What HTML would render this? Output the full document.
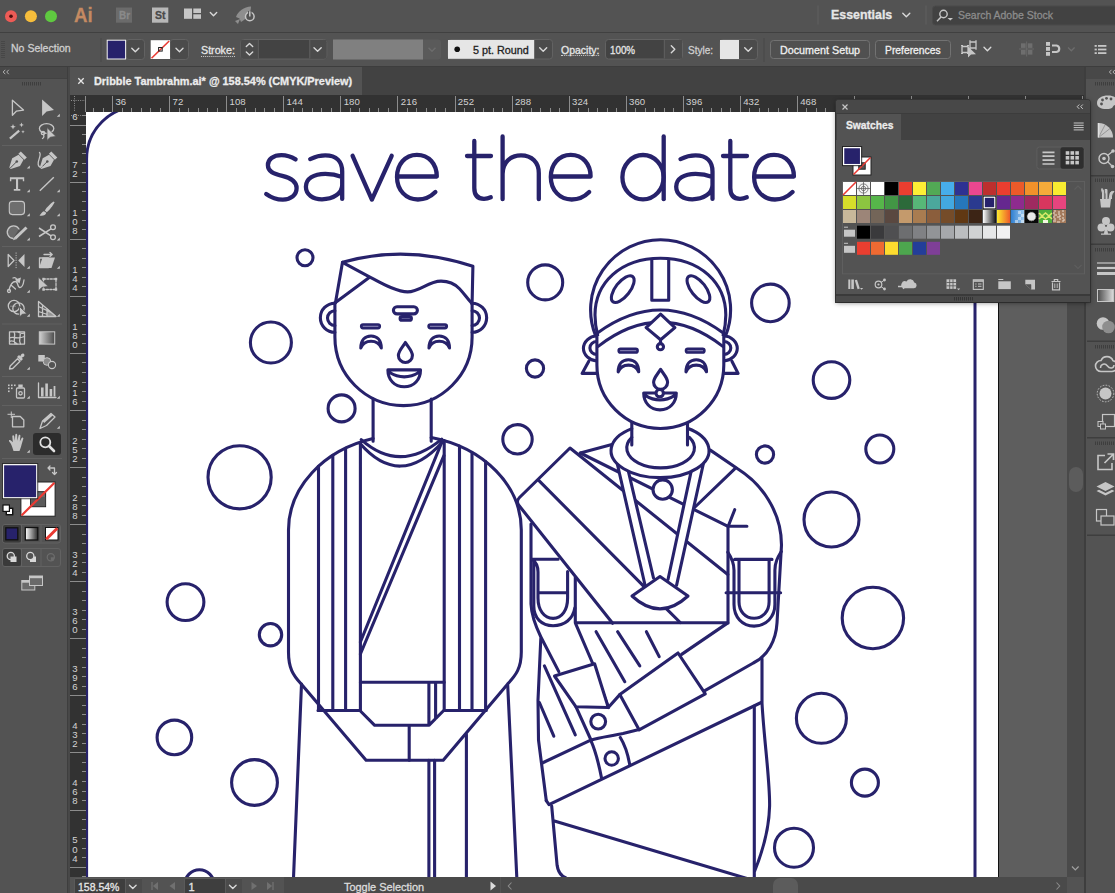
<!DOCTYPE html>
<html><head><meta charset="utf-8"><style>
*{box-sizing:border-box;margin:0;padding:0}
html,body{width:1115px;height:893px;overflow:hidden;background:#535353;font-family:"Liberation Sans",sans-serif;}
.abs{position:absolute}
#root{position:relative;width:1115px;height:893px;overflow:hidden;background:#535353}
.t{position:absolute;white-space:nowrap;color:#dcdcdc;font-size:12px;line-height:14px;transform-origin:0 50%;-webkit-text-stroke:0.3px currentColor}
svg{position:absolute;left:0;top:0;overflow:visible}
</style></head><body>
<div id="root">
<!-- BASE BACKGROUNDS -->
<div class="abs" id="titlebar" style="left:0;top:0;width:1115px;height:32px;background:#535353"></div>
<div class="abs" style="left:0;top:32px;width:1115px;height:1px;background:#404040"></div>
<div class="abs" id="ctrlbar" style="left:0;top:33px;width:1115px;height:33px;background:#535353"></div>
<div class="abs" style="left:0;top:65.5px;width:1115px;height:1.5px;background:#3d3d3d"></div>
<!-- tab bar -->
<div class="abs" style="left:68px;top:67px;width:1018px;height:28px;background:#424242"></div>
<div class="abs" style="left:70px;top:67px;width:292px;height:28px;background:#535353"></div>
<!-- rulers -->
<div class="abs" style="left:70px;top:95px;width:1016px;height:17px;background:#323232"></div>
<div class="abs" style="left:70px;top:95px;width:16px;height:782px;background:#323232"></div>
<!-- canvas pasteboard -->
<div class="abs" id="paste" style="left:86px;top:112px;width:981px;height:765px;background:#5e5e5e"></div>
<!-- artboard -->
<div class="abs" id="artboard" style="left:86px;top:112px;width:913px;height:765px;background:#fff;border-right:1px solid #111"></div>
<!--ARTSTART--><svg width="1115" height="893" viewBox="0 0 1115 893">
<defs><clipPath id="cv"><rect x="86" y="112" width="912" height="765"/></clipPath></defs>
<g clip-path="url(#cv)" fill="none" stroke="#27226b" stroke-width="3.1" stroke-linecap="round" stroke-linejoin="round">
<!-- card border -->
<path d="M86.6 900V159A52.6 52.6 0 0 1 139.2 106.4H922.4A52.6 52.6 0 0 1 975 159V900" stroke-width="3"/>
<!-- TEXT save the date -->
<g id="txt" stroke-width="4.3">
<path d="M295.6 159.4C291 156.5 286.5 155.1 281.5 155.1C273 155.1 267.9 159.5 267.9 165.2C267.9 171.5 273.5 173.8 282.3 175.9C291 178 296.6 181 296.6 188.1C296.6 195 291 199.6 282.8 199.6C276 199.6 270.5 197 266.2 193.9"/>
<path id="la" d="M310.2 159.1C315 156.8 320 155.4 325.3 155.4C336.5 155.4 342.2 161.5 342.2 171.5V198.9M342.2 177C337 175 331.5 173.8 325.3 173.8C313.5 173.8 305.9 178.8 305.9 186.7C305.9 194.5 313 199.3 322 199.3C333 199.3 342.2 193.5 342.2 185"/>
<path d="M352.6 155.8L371.9 199.6L391.7 155.8"/>
<path id="le" d="M397 176.5H436.8C436.8 164 428.9 154.8 416.9 154.8C404.9 154.8 397 164.5 397 177C397 190 405.9 199.5 417.9 199.5C425.4 199.5 430.9 196.5 435.4 192"/>
<path id="lt" d="M474.3 141V188C474.3 195.5 478 198.8 484 198.8C486.5 198.8 488.6 198.3 490.8 197.3M467 156H491"/>
<path d="M502.6 136.5V199.2M502.6 174C502.6 163 510 155.3 521 155.3C532 155.3 538.8 162.5 538.8 173V199.2"/>
<use href="#le" x="153.8"/>
<path d="M663.7 136.5V199.2"/><ellipse cx="643" cy="177.2" rx="20.6" ry="22.2"/>
<use href="#la" x="370.3"/>
<use href="#lt" x="256"/>
<use href="#le" x="357.1"/>
</g>
<!--FS--><!-- circles -->
<g id="circles">
<circle cx="305" cy="257.7" r="8"/><circle cx="270.9" cy="342.5" r="20.5"/><circle cx="341.6" cy="408.4" r="13.5"/>
<circle cx="545.2" cy="282.4" r="17.5"/><circle cx="770.4" cy="302.9" r="18.8"/><circle cx="535" cy="368.5" r="8.6"/>
<circle cx="517.5" cy="439.3" r="14.7"/><circle cx="831.5" cy="380.1" r="18.3"/><circle cx="879.8" cy="449" r="14"/>
<circle cx="765" cy="454.5" r="8.6"/><circle cx="831.5" cy="519.5" r="27.5"/><circle cx="872.9" cy="618" r="30.7"/>
<circle cx="821.4" cy="718.3" r="25"/><circle cx="864.9" cy="782.6" r="13.5"/><circle cx="794" cy="847.7" r="19.5"/>
<circle cx="239.6" cy="477.3" r="31.6"/><circle cx="185.5" cy="602.1" r="18.4"/><circle cx="270.5" cy="634.7" r="11.2"/>
<circle cx="174.4" cy="737.4" r="17.3"/><circle cx="254.5" cy="782.5" r="22.9"/><circle cx="199.4" cy="884.5" r="14.7"/>
</g>
<!-- GROOM -->
<g id="groom">
<!-- body -->
<path d="M373.1 438.6A116.4 95 0 0 0 288.5 530V652C288.5 668 293 675 300.8 683.5L366.1 760.3H443.2L507.7 683.9C516 675 521.3 668 521.3 652V530A116.4 95 0 0 0 431.2 437.5" fill="#fff"/>
<path d="M361.2 439.6Q399.8 474 441.7 439.1M359.9 443.3Q399.8 489.5 442.5 442"/>
<path d="M318.5 466.3V710.5M332.8 455.4V710.5M345.6 448.2V710.5M360.4 442.2V710.5M444.2 440.6V710.5M459.5 446.1V710.5M472 452.4V710.5M485.6 461.5V710.5"/>
<path d="M318 710.5H359.9L374.7 725.3H428.9L443.7 710.5H486.3M360.4 682.2H444.2M428.9 682.2V725.3M435.6 682.2V718.4M409.2 725.3V760.3"/>
<path d="M428.9 760.3V890M434.6 760.3V890M466.4 734.4V890M301.5 684L293 890M507.7 685L517.4 890"/>
<path d="M442.5 440.5L360.4 642M443.9 455.6L360.4 654"/>
<!-- neck -->
<path d="M373.1 399V441.2M431.2 399V441.2"/>
<!-- ears -->
<path d="M334.9 303.2A14.5 14.5 0 0 0 334.9 332.3M334.9 310.7A7.4 7.4 0 0 0 334.9 325.5M472.1 303.2A14.5 14.5 0 0 1 472.1 332.3M472.1 310.7A7.4 7.4 0 0 1 472.1 325.5"/>
<!-- face -->
<path d="M334.9 302.6V337A68.6 68.6 0 0 0 472.1 337V304"/>
<!-- hair -->
<path d="M335.5 302.6L342.5 262.3Q406 244.1 472.9 266.3L472.1 304"/>
<path d="M335.5 302.6L369.9 277.1M342.5 262.3L369.9 277.1C378 281.5 384 285 391.4 287.8C398 290.5 402 291.9 407.6 291.9C420 291.9 428 281.1 441 281.1C450 281.1 455 284 459.5 288.7C464 293.5 467 298 471.5 303"/>
<!-- forehead -->
<rect x="393.4" y="306.7" width="24" height="7.2" rx="3.6"/>
<rect x="400.1" y="316.6" width="11.3" height="3.7" rx="1.8" fill="#8f8cba"/>
<!-- brows -->
<path d="M363 326.3H378M430.4 326.3H445" stroke-width="6.2"/>
<path d="M363.2 326.3H378M430.4 326.3H444.7" stroke-width="1" stroke="#8f8cba"/>
<!-- eyes -->
<path id="eye" d="M360.8 348C360.8 340 365 336 371.05 336C377.1 336 381.3 340 381.3 348C379.5 343.5 376 341.3 371.05 341.3C366 341.3 362.6 343.5 360.8 348Z"/>
<use href="#eye" x="68.2"/>
<!-- nose -->
<path id="nose" d="M405.4 342.5C408.3 347.5 412.4 351 412.4 355.5A7 7 0 0 1 398.4 355.5C398.4 351 402.5 347.5 405.4 342.5Z"/>
<!-- mouth -->
<path id="mouth" d="M387.9 369.9H420.5C420.5 379.5 414 386.8 404.2 386.8C394.4 386.8 387.9 379.5 387.9 369.9ZM389.3 372.3Q404.2 381.5 419.1 372.3"/>
</g>
<!-- BRIDE -->
<g id="bride">
<!-- saree lower -->
<path d="M540.8 638.7L538 700.3L538.5 740L546.3 800.7"/>
<path d="M761.2 702.5L549 804.7L546.3 800.7"/>
<path d="M542.3 763L590.7 740.2C600 737 612 736 623 733.5L639.1 729.4"/>
<path d="M590.7 740.2C596 752 599 765 601.5 777.8M620.3 737.5C625 745 628 755 629.7 764.4"/>
<circle cx="611.7" cy="758.5" r="6.7"/><circle cx="598.2" cy="721.6" r="7.4"/>
<path d="M576 706.8L591 740"/>
<path d="M762 658.7V703C764 740 770 780 769.6 806C769 835 760 858 754.3 872M754.3 706.1V890"/>
<path d="M551.7 806.1L557.1 865.3C558 872 561 876 566 878M554.4 820.9L754 880.6"/>
<!-- hash -->
<path d="M596.1 631.7L624.8 681.7M617.6 631.7L639.8 665.9M646.4 631.7L659.2 656.6M544.4 665.9L575.3 734.8M539.4 702.5L553.8 736.2"/>
<!-- frame lines -->
<path d="M575.3 577.3V622.8H727.8M575.3 622.9L592.5 663L608.3 707.5M727.8 622.9L681.6 654.4"/>
<path d="M728 526.2V623M727.5 526.2H746.9M728.2 526.2L734.7 509.7"/>
<!-- hand rect -->
<path d="M554.5 676L594.6 663.8L608.3 707.5L576 706.8Z" fill="#fff"/>
<!-- forearm -->
<path d="M619.8 694.6L678 653L705.3 693.9L639.1 729.8Z" fill="#fff"/>
<path d="M608.3 707.5L619.8 694.6"/>
<!-- right arm outer -->
<path d="M710.3 450.1L737.6 468.8C762 484 781.5 512 781.5 545L777 623C776 640 768 656 753.3 663L705.3 690.3"/>
<path d="M734.7 468.8L694.5 507.5"/>
<!-- left shoulder & sash -->
<path d="M611.9 444.4L580.3 453"/>
<path d="M727.8 574.5L570 448L519.5 497.5Q515.5 501.5 519 505.5L612.6 623.3"/>
<path d="M538.7 480.3L644.1 586.7M580.3 453L727.5 526.2"/>
<path d="M531 524V604C531.5 617 536 627 541 637.2L558.8 671.6"/>
<!-- left armlet -->
<path d="M531.8 559.3H558.1M533.8 561V606C533.8 618 541.5 625.7 553.1 625.7C564.5 625.7 573 619 574.8 608M532.5 560C536 562 538 566 538 572V598C538 610 544 618.4 553.1 618.4C562 618.4 567.6 610 567.6 598V571.6M538 592.7H567.6"/>
<!-- right armlet -->
<path d="M734.7 559.4H772M727.8 552.2C731 557 734 562 734 570.2V604.6C734 617 742 626.1 754.1 626.1C766 626.1 774.9 617 774.9 604.6V570.2C774.9 562 778 557 781.3 551.5M739 559.4V601.7C739 611 745 618.2 754.1 618.2C763 618.2 769.1 611 769.1 601.7V559.4M726.1 592.7H780.6"/>
<!-- straps -->
<path d="M615 455L627 461L653.5 578L645 585Z" fill="#fff" stroke="none"/>
<path d="M694 458L706 452L676.6 585.2L668 579.5Z" fill="#fff" stroke="none"/>
<path d="M615.5 456L645 585M627 465.5L653.5 578M694 458L668 579.5M705.6 453.5L676.6 585.2"/>
<!-- ring -->
<circle cx="662.7" cy="489.6" r="9.7" fill="#fff"/>
<!-- pendant -->
<path d="M666.5 608.9L680.2 622.5"/>
<path d="M660 576.6L688 596Q660 621.8 632 596Z" fill="#fff"/>
<!-- choker -->
<ellipse cx="660.6" cy="450.4" rx="49" ry="27" fill="#fff" stroke="none"/><path d="M631.8 428.6A49 27 0 1 0 687.5 428.3"/>
<path d="M631.8 437.3A33.9 20 0 1 0 689.4 437.3"/>
<path d="M631.8 423V445M687.5 423V445"/>
<!-- veil -->
<path d="M595.6 335.7A70 70 0 1 1 725.6 335.7"/>
<path d="M597.7 335.5C596 329 595 322 595 315C595 283 620.4 258.2 660.4 258.2C700.4 258.2 725.8 283 725.8 315C725.8 322 724.8 329 723.1 335.5"/>
<!-- ears -->
<path d="M596.9 335.7A14.8 12.7 0 0 0 596.9 361M596.9 341.5A7 6.5 0 0 0 596.9 354.5M723.8 335.7A14.8 12.7 0 0 1 723.8 361M723.8 341.5A7 6.5 0 0 1 723.8 354.5"/>
<path d="M588.8 361.2L582.1 373.4H596.3M731.9 361.2L738.1 373.4H724.7"/>
<!-- face -->
<path d="M596.9 336V365A63.45 63.45 0 0 0 723.8 365V336" fill="#fff"/>
<path d="M597.4 333Q660.6 287 723.3 333M598.2 346.4Q660.6 298 722.8 346.4"/>
<path d="M651.8 260V300.3H668.7V260"/>
<ellipse cx="622.75" cy="289.1" rx="16" ry="7.2" transform="rotate(-52 622.75 289.1)"/>
<ellipse cx="698.45" cy="289.1" rx="16" ry="7.2" transform="rotate(52 698.45 289.1)"/>
<path d="M660.6 314.2L674.9 327.6L660.6 339.7L646.1 327.6Z" fill="#fff"/>
<path d="M660.5 339.7V343.5"/><circle cx="660.4" cy="346.7" r="3.1" fill="#fff"/>
<path d="M620.5 350.7H635.8M687.8 350.7H702.6" stroke-width="6.2"/>
<path d="M620.5 350.7H635.8M687.8 350.7H702.6" stroke-width="1" stroke="#8f8cba"/>
<use href="#eye" x="257.4" y="23.8"/><use href="#eye" x="325.2" y="23.8"/>
<use href="#nose" x="255.2" y="26.8"/>
<use href="#mouth" x="255.8" y="23.1"/>
<circle cx="659.7" cy="393.2" r="3.7" fill="#fff"/>
</g>
<!--FE-->
</g>
</svg>
<!--ARTEND-->
<!--UISTART--><style>
.ic{fill:none;stroke:#c6c6c6;stroke-width:1.3;stroke-linecap:round;stroke-linejoin:round}
.icf{fill:#c6c6c6;stroke:none}
.sep{position:absolute;background:#616161;height:1px}
.box{position:absolute;border:1px solid #646464;border-radius:3px;background:#4b4b4b}
.chev{fill:none;stroke:#d8d8d8;stroke-width:1.4;stroke-linecap:round;stroke-linejoin:round}
</style>
<!-- ===== TITLE BAR ===== -->
<svg width="1115" height="66" viewBox="0 0 1115 66">
<circle cx="11" cy="16.3" r="6" fill="#ee5b56"/><circle cx="11" cy="16.3" r="1.8" fill="#4d0e0c"/>
<circle cx="30.9" cy="16.3" r="6" fill="#f6bd3b"/><circle cx="51" cy="16.3" r="6" fill="#5fc940"/>
<rect x="116" y="7.5" width="16" height="15.2" fill="#6b6b6b"/><rect x="152" y="7.5" width="16.3" height="15.2" fill="#b8b8b8"/>
<!-- layout icon -->
<rect x="184" y="8.5" width="8" height="10.3" fill="#c6c6c6"/><rect x="193.3" y="8.5" width="7.7" height="4.5" fill="#c6c6c6"/><rect x="193.3" y="14.3" width="7.7" height="4.5" fill="#c6c6c6"/>
<path class="chev" d="M210.3 12.5L213.5 15.7L216.7 12.5"/>
<!-- rocket -->
<path d="M236 17C238 11 244 7 251 6.5C251 11 249 16 244 20L241 22L239.5 18.5Z" fill="#8e8e8e"/><path d="M235 21L240 19L238 24Z" fill="#8e8e8e"/>
<circle cx="249.8" cy="16.5" r="4.3" fill="#535353" stroke="#c6c6c6" stroke-width="1.5"/><path d="M249.8 11V16.5" stroke="#535353" stroke-width="3.5"/><path d="M249.8 11.3V16.5" stroke="#c6c6c6" stroke-width="1.5"/>
<!-- essentials -->
<rect x="817.5" y="5.5" width="1" height="19" fill="#616161"/><rect x="925.5" y="5.5" width="1" height="19" fill="#616161"/>
<path class="chev" d="M902.8 13.3L906.3 16.8L909.8 13.3"/>
<rect x="932.5" y="6" width="200" height="19" rx="3" fill="#424242" stroke="#4a4a4a"/>
<circle cx="943.5" cy="14" r="3.7" fill="none" stroke="#c6c6c6" stroke-width="1.4"/><path d="M941 17L937 21.3" stroke="#c6c6c6" stroke-width="1.4"/><path d="M947.5 18L953 18L950.3 20.6Z" fill="#c6c6c6"/>
<!-- ===== CONTROL BAR ===== -->
<path d="M2 41V59M4 41V59" stroke="#3d3d3d" stroke-width="1" stroke-dasharray="1 1"/>
<rect x="100.5" y="38" width="1" height="24" fill="#484848"/>
<!-- fill swatch -->
<rect x="126" y="39.5" width="18.5" height="20" rx="3" fill="#4b4b4b" stroke="#626262"/>
<rect x="107.2" y="40.2" width="18.4" height="18.8" fill="#27226b" stroke="#f2f2f2" stroke-width="1"/>
<path class="chev" d="M131.8 48.2L135.3 51.7L138.8 48.2"/>
<!-- stroke swatch -->
<rect x="170" y="39.5" width="18.5" height="20" rx="3" fill="#4b4b4b" stroke="#626262"/>
<rect x="150.7" y="40.2" width="19.3" height="18.8" fill="#fff"/><path d="M151.5 58.2L169.2 41" stroke="#ea3a33" stroke-width="1.6"/><rect x="158.6" y="47.5" width="3.6" height="3.6" fill="none" stroke="#222" stroke-width="1"/>
<path class="chev" d="M176 48.2L179.5 51.7L183 48.2"/>
<!-- stroke stepper / input -->
<rect x="240.8" y="39.5" width="86" height="19.5" rx="3" fill="#434343" stroke="#626262"/>
<rect x="241.3" y="40" width="16.5" height="18.5" fill="#4b4b4b"/><rect x="257.8" y="40" width="1" height="18.5" fill="#626262"/>
<rect x="309.8" y="40" width="16.5" height="18.5" fill="#4b4b4b"/><rect x="309.3" y="40" width="1" height="18.5" fill="#626262"/>
<path class="chev" d="M246.3 46.5L249.5 43.5L252.7 46.5M246.3 52L249.5 55L252.7 52"/>
<path class="chev" d="M314 47.8L317.6 51.3L321.2 47.8"/>
<!-- grey field -->
<rect x="333" y="39.5" width="108" height="20" rx="3" fill="#5a5a5a"/>
<rect x="333" y="39.5" width="90" height="20" fill="#808080"/>
<path d="M428.5 47.8L432 51.3L435.5 47.8" fill="none" stroke="#6c6c6c" stroke-width="1.4"/>
<!-- brush -->
<rect x="448" y="39.5" width="104.5" height="19.5" rx="3" fill="#4b4b4b" stroke="#626262"/>
<rect x="448" y="40" width="86.2" height="18.8" fill="#e6e6e6"/><circle cx="457.2" cy="49.3" r="2.8" fill="#111"/>
<path class="chev" d="M539.7 47.8L543.2 51.3L546.7 47.8"/>
<!-- opacity -->
<rect x="605.5" y="39.5" width="77" height="19.5" rx="3" fill="#434343" stroke="#626262"/>
<rect x="664.3" y="40" width="17.7" height="18.5" fill="#4b4b4b"/><rect x="663.8" y="40" width="1" height="18.5" fill="#626262"/>
<path class="chev" d="M671.3 45.8L674.8 49.3L671.3 52.8"/>
<!-- style -->
<rect x="720" y="39.5" width="37.5" height="20" rx="3" fill="#4b4b4b" stroke="#626262"/>
<rect x="720" y="40" width="19" height="19" fill="#e6e6e6"/>
<path class="chev" d="M744.7 47.8L748.2 51.3L751.7 47.8"/>
<rect x="763.5" y="38" width="1" height="24" fill="#484848"/>
<rect x="770.5" y="40.5" width="99" height="18" rx="3" fill="#505050" stroke="#727272"/>
<rect x="875.5" y="40.5" width="75" height="18" rx="3" fill="#505050" stroke="#727272"/>
<!-- arrange icon -->
<rect x="962" y="46.5" width="6" height="6" class="ic" stroke-width="1.2"/><rect x="970" y="42" width="6" height="6" class="ic" stroke-width="1.2"/>
<path d="M961 45.5h2m4 0h2m-8 8h2m4 0h2M969 41h2m4 0h2m-8 8h2m4 0h2" stroke="#c6c6c6" stroke-width="1"/>
<path d="M968 46.5L968 57.5L971 54.5L976 54.3Z" class="icf"/>
<path class="chev" d="M984 47.3L987.4 50.7L990.8 47.3"/>
<!-- grid icon dim -->
<g fill="#6e6e6e"><rect x="1021" y="43.3" width="4.6" height="4.6"/><rect x="1027.8" y="43.3" width="4.6" height="4.6"/><rect x="1021" y="50" width="4.6" height="4.6"/><rect x="1027.8" y="50" width="4.6" height="4.6"/><rect x="1026.3" y="41.5" width="0.8" height="15"/><rect x="1019" y="48.6" width="15" height="0.8"/></g>
<!-- magnet -->
<g fill="#c6c6c6"><rect x="1046" y="42" width="4" height="3.8"/><rect x="1046" y="47" width="4" height="3.8"/><rect x="1046" y="52" width="4" height="3.8"/></g>
<path d="M1052 45.5H1056.5A3.3 3.3 0 0 1 1056.5 52H1052" fill="none" stroke="#c6c6c6" stroke-width="2.2"/>
<path d="M1068 47.5L1071.3 50.8L1074.6 47.5" fill="none" stroke="#6c6c6c" stroke-width="1.3"/>
<!-- list icon -->
<g fill="#c6c6c6"><rect x="1094.6" y="45" width="2.2" height="1.8"/><rect x="1098" y="45" width="8.4" height="1.8"/><rect x="1094.6" y="48.6" width="2.2" height="1.8"/><rect x="1098" y="48.6" width="8.4" height="1.8"/><rect x="1094.6" y="52.2" width="2.2" height="1.8"/><rect x="1098" y="52.2" width="8.4" height="1.8"/></g>
</svg>
<!-- title texts -->
<div class="t" id="t_ai" style="transform:scaleX(0.8857);left:74.3px;top:3.5px;font-size:21px;line-height:21px;font-weight:bold;color:#c48a62">Ai</div>
<div class="t" id="t_br" style="transform:scaleX(0.8991);left:118.5px;top:9px;font-size:11px;line-height:13px;font-weight:bold;color:#8a8a8a">Br</div>
<div class="t" id="t_st" style="transform:scaleX(0.9545);left:155px;top:9px;font-size:11px;line-height:13px;font-weight:bold;color:#4a4a4a">St</div>
<div class="t" id="t_ess" style="transform:scaleX(0.9896);left:831.3px;top:7.5px;font-size:12.5px;line-height:15px;font-weight:bold;color:#e6e6e6">Essentials</div>
<div class="t" id="t_search" style="transform:scaleX(0.9115);left:958px;top:8px;font-size:11.5px;line-height:14px;color:#8c8c8c">Search Adobe Stock</div>
<div class="t" id="t_nosel" style="transform:scaleX(0.9571);left:11.3px;top:41.3px;font-size:11px;line-height:14px;color:#cfcfcf">No Selection</div>
<div class="t" id="t_stroke" style="transform:scaleX(0.9725);left:200.8px;top:43px;font-size:11px;line-height:14px;color:#e6e6e6;border-bottom:1px dotted #cfcfcf;height:13.5px">Stroke:</div>
<div class="t" id="t_brush" style="transform:scaleX(0.9811);left:472.6px;top:42.7px;font-size:11px;line-height:14px;color:#222">5 pt. Round</div>
<div class="t" id="t_op" style="transform:scaleX(0.9539);left:560.5px;top:42.7px;font-size:11px;line-height:14px;color:#e6e6e6;border-bottom:1px dotted #cfcfcf;height:13.8px">Opacity:</div>
<div class="t" id="t_100" style="transform:scaleX(0.8919);left:609.5px;top:42.5px;font-size:11px;line-height:14px;color:#e6e6e6">100%</div>
<div class="t" id="t_style" style="transform:scaleX(0.9086);left:688px;top:43px;font-size:11px;line-height:14px;color:#cfcfcf">Style:</div>
<div class="t" id="t_doc" style="transform:scaleX(0.9776);left:779.9px;top:42.7px;font-size:11px;line-height:14px;color:#f0f0f0">Document Setup</div>
<div class="t" id="t_pref" style="transform:scaleX(0.9374);left:885px;top:42.7px;font-size:11px;line-height:14px;color:#f0f0f0">Preferences</div>
<!-- ===== TOOLBOX ===== -->
<div class="abs" style="left:0;top:67px;width:67px;height:826px;background:#535353"></div>
<div class="abs" style="left:67px;top:67px;width:3px;height:826px;background:#484848"></div><div class="abs" style="left:67px;top:67px;width:1px;height:826px;background:#3e3e3e"></div>
<div class="abs" style="left:0;top:67px;width:67px;height:11.5px;background:#484848;border-bottom:1px solid #424242"></div>
<svg width="70" height="600" viewBox="0 0 70 600">
<path d="M5.3 69.8L3.2 72L5.3 74.2M8.8 69.8L6.7 72L8.8 74.2" fill="none" stroke="#b4b4b4" stroke-width="1"/>
<g fill="#3e3e3e"><rect x="22" y="82" width="1" height="3.5"/><rect x="24" y="82" width="1" height="3.5"/><rect x="26" y="82" width="1" height="3.5"/><rect x="28" y="82" width="1" height="3.5"/><rect x="30" y="82" width="1" height="3.5"/><rect x="32" y="82" width="1" height="3.5"/><rect x="34" y="82" width="1" height="3.5"/><rect x="36" y="82" width="1" height="3.5"/><rect x="38" y="82" width="1" height="3.5"/><rect x="40" y="82" width="1" height="3.5"/></g>
<!-- row1 -->
<path class="ic" d="M12.4 100.2V115.3L16.3 111.2L23.5 110.1Z"/>
<path class="icf" d="M42.1 99.5V116L46.6 111.5L54 110Z"/><path class="icf" d="M59.8 113.8V116.8H56.8Z"/>
<!-- row2 wand -->
<path d="M9.9 138.7L19.2 130.6" stroke="#c6c6c6" stroke-width="2.2"/><path class="icf" d="M13 124l.8 2 2 .8-2 .8-.8 2-.8-2-2-.8 2-.8zM21.5 122.5l.7 1.7 1.7.7-1.7.7-.7 1.7-.7-1.7-1.7-.7 1.7-.7zM23 130l.5 1.2 1.2.5-1.2.5-.5 1.2-.5-1.2-1.2-.5 1.2-.5z"/>
<!-- lasso -->
<ellipse cx="46.6" cy="128.5" rx="7.2" ry="4.8" class="ic" stroke-width="1.2"/><circle cx="43" cy="133" r="1.7" class="ic" stroke-width="1.1"/><path class="ic" d="M43.5 134.7C44.5 136.5 43.5 138 42.5 138.5" stroke-width="1.1"/>
<path d="M47 127.5V140.5L50.3 137.2L56 136.5Z" fill="#c6c6c6" stroke="#535353" stroke-width="0.8"/>
<rect x="2" y="145" width="60" height="1" fill="#616161"/>
<!-- row3 pen -->
<g id="pen"><path class="icf" d="M9.3 167.5L12.2 158.3L18.6 154.8L23.5 159.7L20 166.1L10.8 169Z"/><path d="M10.3 168L16.5 161.8" stroke="#535353" stroke-width="1"/><circle cx="16.8" cy="161.5" r="1.3" fill="#535353"/><path d="M19.5 153.8L24.5 158.8" stroke="#535353" stroke-width="1.3"/><path class="icf" d="M19.6 152.6L22 150.2L28 156.2L25.6 158.6Z" transform="translate(-1.2 1.2)"/></g>
<path class="icf" d="M29.8 165.5V168.5H26.8Z"/>
<use href="#pen" x="30.5"/><path class="ic" d="M39.5 152.5C42 155 37.5 160 38.2 164.5C38.7 167 40.5 167.8 42 166.5" stroke-width="1.2"/>
<!-- row4 T / line -->
<path class="icf" d="M9.9 177.3H24.2V181.2H22.8V179.2H18.1V188.9H20.3V190.7H13.8V188.9H16V179.2H11.3V181.2H9.9Z"/><path class="icf" d="M29.8 189.2V192.2H26.8Z"/>
<path d="M39.8 190.7L53.8 177.3" stroke="#c6c6c6" stroke-width="1.4"/><path class="icf" d="M59.8 189.2V192.2H56.8Z"/>
<!-- row5 rect / brush -->
<rect x="9.3" y="201.4" width="15.2" height="13.2" rx="3" fill="#6e6e6e" stroke="#c6c6c6" stroke-width="1.1"/><path class="icf" d="M29.8 213.2V216.2H26.8Z"/>
<path d="M53.5 201.5C50.5 203.5 46.5 207.5 44.8 210.5L46.8 212.2C49.5 210 53.2 205.5 54.6 202.3Z" class="icf"/><path class="icf" d="M44 211.3C42 211.5 41.5 213.5 39.5 215.5C42.5 216.5 46 215 46.2 212.8Z"/><path class="icf" d="M59.8 213.2V216.2H56.8Z"/>
<!-- row6 shaper / scissors -->
<path d="M19 229A6.3 6.3 0 1 0 13 238.5" class="ic" stroke-width="1.2" style="fill:#6a6a6a"/><path d="M15 238.5L26.5 227.5" stroke="#c6c6c6" stroke-width="3"/><path class="icf" d="M13 240.3L14 237.2L16 239.2Z"/><path class="icf" d="M29.8 237.6V240.6H26.8Z"/>
<circle cx="53" cy="227.3" r="2.4" class="ic" stroke-width="1.2"/><circle cx="53" cy="237.3" r="2.4" class="ic" stroke-width="1.2"/><path d="M51 228.8L39 236.5M51 235.8L39 228" stroke="#c6c6c6" stroke-width="1.6"/><path class="icf" d="M59.8 237.6V240.6H56.8Z"/>
<rect x="2" y="246" width="60" height="1" fill="#616161"/>
<!-- row7 reflect / shear -->
<path class="ic" d="M8.2 254.5V266.5L14 260.5Z" stroke-width="1.1"/><path class="icf" d="M24.5 254V267L18.2 260.5Z"/><path d="M16.1 252.5V268.5" stroke="#c6c6c6" stroke-width="0.9" stroke-dasharray="1.2 1.2"/><path class="icf" d="M29.8 265.8V268.8H26.8Z"/>
<path class="icf" d="M42.5 257.5H55L51.5 268H39Z"/><rect x="39.5" y="258" width="9" height="9.5" class="ic" stroke-width="1" /><path class="ic" d="M44 254.5H52M50 252.5L52.2 254.5L50 256.5" stroke-width="1.1"/><path class="icf" d="M59.8 265.8V268.8H56.8Z"/>
<!-- row8 warp / free transform -->
<path class="ic" d="M9 290C10 286 12 281.5 15.5 281.5C18.5 281.5 17 287.5 20 287.5C22.5 287.5 23.5 283.5 24 280" stroke-width="1.3"/><path class="ic" d="M13 278C15 277 17.5 278.5 17 281M11.5 285.5L15.5 289" stroke-width="1.2"/><circle cx="9" cy="291" r="1.5" class="ic" stroke-width="1"/><path class="icf" d="M15 279.5L21 277.5L19.5 283.5Z"/><path class="icf" d="M29.8 289.8V292.8H26.8Z"/>
<rect x="43.5" y="279" width="12.5" height="10.5" class="ic" stroke-width="1" stroke-dasharray="2 1.4"/><g class="icf"><rect x="42.3" y="277.8" width="2.4" height="2.4"/><rect x="54.8" y="277.8" width="2.4" height="2.4"/><rect x="42.3" y="288.3" width="2.4" height="2.4"/><rect x="54.8" y="288.3" width="2.4" height="2.4"/></g><path d="M38.3 277V291L42 287.3L48.3 286.5Z" fill="#c6c6c6" stroke="#535353" stroke-width="0.8"/>
<!-- row9 shape builder / perspective -->
<circle cx="14" cy="306" r="5.7" class="ic" stroke-width="1.1"/><circle cx="18.5" cy="308.5" r="5.7" class="ic" stroke-width="1.1"/><path d="M10.5 306.2H15.5" stroke="#c6c6c6" stroke-width="1" stroke-dasharray="1 1"/><path d="M19.5 306.5V317L22.2 314.3L27 313.8Z" fill="#c6c6c6" stroke="#535353" stroke-width="0.8"/><path class="icf" d="M29.8 313.8V316.8H26.8Z"/>
<path class="ic" d="M38.5 301.5V316.5L56 316.5ZM42.5 305V316.5M47 309V316.5M38.5 306.5L51 312.3M38.5 311.5L46 314" stroke-width="1"/><path class="icf" d="M47 308L57 316.8H47Z" opacity=".55"/><path class="icf" d="M59.8 313.8V316.8H56.8Z"/>
<rect x="2" y="323.5" width="60" height="1" fill="#616161"/>
<!-- row10 mesh / gradient -->
<rect x="9.5" y="331.8" width="15" height="12.3" class="ic" stroke-width="1.1"/><path class="ic" d="M9.5 338C13 335.5 16 340 24.5 336.5M14 331.8C16.5 335.5 12.5 339.5 15 344M19.5 331.8C22.5 336 17.5 339 20.5 344M9.5 341.5C13 339.5 15 342 17 344M18 331.8C20 334 22.5 333.5 24.5 332.8" stroke-width="1"/>
<defs><linearGradient id="gr1" x1="0" x2="1"><stop offset="0" stop-color="#d2d2d2"/><stop offset="1" stop-color="#4a4a4a"/></linearGradient><linearGradient id="gr3" x1="0" x2="1"><stop offset="0" stop-color="#fff"/><stop offset="1" stop-color="#2a2a2a"/></linearGradient><linearGradient id="gr2" x1="0" x2="1"><stop offset="0" stop-color="#4a4a4a"/><stop offset="1" stop-color="#e0e0e0"/></linearGradient></defs>
<rect x="39.3" y="331.8" width="15.4" height="12.3" fill="url(#gr1)" stroke="#c6c6c6" stroke-width="1"/>
<!-- row11 eyedropper / blend -->
<path d="M9.5 369L10.2 366L17.5 358.7L20 361.2L12.7 368.5Z" class="ic" stroke-width="1.2"/><path class="icf" d="M17 357L19 355L20.3 356.3C21 354 22.5 352.8 24 354C25.2 355.5 24 357 21.7 357.7L23 359L21 361Z"/><path class="icf" d="M29.8 366.8V369.8H26.8Z"/>
<rect x="38.3" y="355" width="6.5" height="6.5" class="icf"/><circle cx="47" cy="361.5" r="3.8" fill="#8a8a8a" stroke="#c6c6c6" stroke-width="1"/><circle cx="52" cy="365" r="3.6" fill="#535353" stroke="#c6c6c6" stroke-width="1.1"/>
<rect x="2" y="376" width="60" height="1" fill="#616161"/>
<!-- row12 sprayer / graph -->
<rect x="16.5" y="388" width="8" height="10" rx="1" class="ic" stroke-width="1.2"/><rect x="18.3" y="384.5" width="4.4" height="3" class="icf"/><circle cx="20.5" cy="393.3" r="1.7" class="ic" stroke-width="1"/><g class="icf"><rect x="8" y="384.5" width="1.6" height="1.6"/><rect x="11" y="384.5" width="1.6" height="1.6"/><rect x="14" y="384.5" width="1.6" height="1.6"/><rect x="8" y="387.5" width="1.6" height="1.6"/><rect x="11" y="387.5" width="1.6" height="1.6"/><rect x="8" y="390.5" width="1.6" height="1.6"/></g><path class="icf" d="M29.8 395.8V398.8H26.8Z"/>
<path d="M38.5 383V397.5H56" class="ic" stroke-width="1.1"/><g class="icf"><rect x="41" y="387.5" width="2.6" height="9"/><rect x="45.3" y="383.5" width="2.6" height="13"/><rect x="49.6" y="389" width="2.6" height="7.5"/><rect x="53.6" y="386" width="1.8" height="10.5"/></g><path class="icf" d="M59.8 395.8V398.8H56.8Z"/>
<rect x="2" y="405" width="60" height="1" fill="#616161"/>
<!-- row13 artboard / slice -->
<path class="ic" d="M12.5 416.5V426.8H23.8V420L20.3 416.5Z" stroke-width="1.2"/><path d="M7.5 414.3H15M11.3 411.5V418" stroke="#c6c6c6" stroke-width="1"/>
<path d="M40 428.5L42.5 421L51 413.5L55 417L46.5 425.5Z" class="ic" stroke-width="1.2"/><path d="M42.5 421L51 413.5L53 415.3L44.2 423Z" class="icf"/><path class="icf" d="M59.8 425.8V428.8H56.8Z"/>
<!-- row14 hand / zoom -->
<path class="icf" d="M11.2 444.5C10.3 442.5 8.5 441.5 9 440.3C10 439.3 11.5 440.5 12.8 442.3L12.3 436.3C12.3 435 14 435 14.2 436.3L14.8 440.8L15.3 434.8C15.4 433.5 17.1 433.5 17.2 434.8L17.4 440.8L18.6 435.5C18.9 434.3 20.5 434.6 20.4 435.9L19.8 441.5L21.6 438C22.2 436.9 23.7 437.5 23.3 438.8L21.6 444.5C21 447.5 20 449.5 19.5 451H13.5C13 449 12 446.5 11.2 444.5Z"/><path class="icf" d="M29.8 449.8V452.8H26.8Z"/>
<rect x="33" y="433" width="28" height="22" rx="3" fill="#2c2c2c"/>
<circle cx="45.3" cy="442.3" r="5" fill="none" stroke="#e2e2e2" stroke-width="1.8"/><path d="M49 446L54 451" stroke="#e2e2e2" stroke-width="2.6" stroke-linecap="round"/>
<rect x="2" y="458" width="60" height="1" fill="#616161"/>
<!-- fill/stroke -->
<rect x="20.9" y="482" width="34.2" height="34.2" fill="#fff" stroke="#222" stroke-width="1"/><rect x="30.6" y="491.7" width="15" height="15" fill="#6a6a6a" stroke="#222" stroke-width="1"/><rect x="31.3" y="497" width="14" height="9" fill="#5a5a5a"/>
<path d="M21.5 515.5L54.5 482.7" stroke="#ea3a33" stroke-width="2.2"/>
<rect x="3.4" y="464.6" width="33.4" height="33.2" fill="#27226b" stroke="#f4f4f4" stroke-width="1.4"/><rect x="2.4" y="463.6" width="35.4" height="35.2" fill="none" stroke="#222" stroke-width="0.8"/>
<path class="ic" d="M48 468H54.5V474.5M48 468L50 466M48 468L50 470M54.5 474.5L52.5 472.5M54.5 474.5L56.5 472.5" stroke-width="1.2"/>
<rect x="6.3" y="508.3" width="6.4" height="6.4" fill="#fff" stroke="#111" stroke-width="1.4"/><rect x="3" y="505" width="6.4" height="6.4" fill="#fff" stroke="#111" stroke-width="1.2"/>
<!-- mode buttons -->
<rect x="2.5" y="524.5" width="58" height="18.5" rx="2.5" fill="none" stroke="#626262" stroke-width="1"/><rect x="3" y="525" width="18" height="17.5" rx="2" fill="#3a3a3a"/><path d="M21.5 525V542.5M41 525V542.5" stroke="#626262"/>
<rect x="5.8" y="527.8" width="12" height="12" fill="#27226b" stroke="#111" stroke-width="1.3"/>
<rect x="25.3" y="527.5" width="12.5" height="12.5" fill="url(#gr3)" stroke="#111" stroke-width="1.3"/>
<rect x="45.5" y="527.5" width="12.5" height="12.5" fill="#fff" stroke="#111" stroke-width="1"/><path d="M46.2 539.3L57.3 528.2" stroke="#ea3a33" stroke-width="3"/>
<rect x="2.5" y="548.5" width="58" height="18" rx="2.5" fill="none" stroke="#626262" stroke-width="1"/><rect x="3" y="549" width="18" height="17" rx="2" fill="#3a3a3a"/><path d="M21.5 549V566M41 549V566" stroke="#626262"/>
<circle cx="10.8" cy="556" r="3.6" fill="#535353" stroke="#d8d8d8" stroke-width="1.3"/><rect x="10.5" y="556.5" width="6" height="5.5" fill="#d8d8d8"/>
<rect x="30" y="556.5" width="6" height="5.5" fill="#d8d8d8"/><circle cx="30.3" cy="556" r="3.6" fill="#535353" stroke="#d8d8d8" stroke-width="1.3"/>
<circle cx="50.8" cy="557.3" r="3.6" fill="none" stroke="#6c6c6c" stroke-width="1.2"/><path d="M50.8 557.3h3.2v3.2h-3.2z" fill="#6c6c6c"/>
<!-- screen mode -->
<rect x="21.8" y="580.5" width="13" height="9.5" fill="#6a6a6a" stroke="#c6c6c6" stroke-width="1"/><rect x="21.8" y="580.5" width="13" height="2.2" fill="#c6c6c6"/>
<rect x="29.5" y="576" width="13" height="9.5" fill="#6a6a6a" stroke="#c6c6c6" stroke-width="1"/><rect x="29.5" y="576" width="13" height="2.2" fill="#c6c6c6"/>
</svg>
<!-- ===== TAB ===== -->
<svg width="1115" height="120" viewBox="0 0 1115 120">
<path d="M78.3 78.3L83.7 83.7M83.7 78.3L78.3 83.7" stroke="#e6e6e6" stroke-width="1.3"/>
<!-- ruler corner dotted -->
<path d="M71 100.5H85M74.5 96V112M71 115.5H82" stroke="#9a9a9a" stroke-width="0.9" stroke-dasharray="1 1.3"/>
<path d="M85.5 96V112" stroke="#8c8c8c" stroke-width="1"/>
</svg>
<div class="t" id="t_tab" style="transform:scaleX(0.9909);left:94.4px;top:73.5px;font-size:11px;line-height:14px;font-weight:bold;color:#ececec">Dribble Tambrahm.ai* @ 158.54% (CMYK/Preview)</div>
<!--RS--><svg width="1115" height="893" viewBox="0 0 1115 893"><g stroke="#8c8c8c" stroke-width="1" fill="none"><path d="M93.5 108V112"/><path d="M103.5 108V112"/><path d="M112.5 96V112"/><path d="M122.5 108V112"/><path d="M131.5 108V112"/><path d="M141.5 108V112"/><path d="M150.5 108V112"/><path d="M160.5 108V112"/><path d="M169.5 96V112"/><path d="M179.5 108V112"/><path d="M188.5 108V112"/><path d="M198.5 108V112"/><path d="M207.5 108V112"/><path d="M217.5 108V112"/><path d="M226.5 96V112"/><path d="M236.5 108V112"/><path d="M245.5 108V112"/><path d="M255.5 108V112"/><path d="M264.5 108V112"/><path d="M274.5 108V112"/><path d="M283.5 96V112"/><path d="M293.5 108V112"/><path d="M302.5 108V112"/><path d="M312.5 108V112"/><path d="M321.5 108V112"/><path d="M331.5 108V112"/><path d="M340.5 96V112"/><path d="M350.5 108V112"/><path d="M359.5 108V112"/><path d="M369.5 108V112"/><path d="M378.5 108V112"/><path d="M388.5 108V112"/><path d="M397.5 96V112"/><path d="M407.5 108V112"/><path d="M416.5 108V112"/><path d="M426.5 108V112"/><path d="M435.5 108V112"/><path d="M445.5 108V112"/><path d="M455.5 96V112"/><path d="M464.5 108V112"/><path d="M474.5 108V112"/><path d="M483.5 108V112"/><path d="M493.5 108V112"/><path d="M502.5 108V112"/><path d="M512.5 96V112"/><path d="M521.5 108V112"/><path d="M531.5 108V112"/><path d="M540.5 108V112"/><path d="M550.5 108V112"/><path d="M559.5 108V112"/><path d="M569.5 96V112"/><path d="M578.5 108V112"/><path d="M588.5 108V112"/><path d="M597.5 108V112"/><path d="M607.5 108V112"/><path d="M616.5 108V112"/><path d="M626.5 96V112"/><path d="M635.5 108V112"/><path d="M645.5 108V112"/><path d="M654.5 108V112"/><path d="M664.5 108V112"/><path d="M673.5 108V112"/><path d="M683.5 96V112"/><path d="M692.5 108V112"/><path d="M702.5 108V112"/><path d="M711.5 108V112"/><path d="M721.5 108V112"/><path d="M730.5 108V112"/><path d="M740.5 96V112"/><path d="M749.5 108V112"/><path d="M759.5 108V112"/><path d="M768.5 108V112"/><path d="M778.5 108V112"/><path d="M787.5 108V112"/><path d="M797.5 96V112"/><path d="M806.5 108V112"/><path d="M816.5 108V112"/><path d="M825.5 108V112"/><path d="M835.5 108V112"/><path d="M844.5 108V112"/><path d="M854.5 96V112"/><path d="M864.5 108V112"/><path d="M873.5 108V112"/><path d="M883.5 108V112"/><path d="M892.5 108V112"/><path d="M902.5 108V112"/><path d="M911.5 96V112"/><path d="M921.5 108V112"/><path d="M930.5 108V112"/><path d="M940.5 108V112"/><path d="M949.5 108V112"/><path d="M959.5 108V112"/><path d="M968.5 96V112"/><path d="M978.5 108V112"/><path d="M987.5 108V112"/><path d="M997.5 108V112"/><path d="M1006.5 108V112"/><path d="M1016.5 108V112"/><path d="M1025.5 96V112"/><path d="M1035.5 108V112"/><path d="M1044.5 108V112"/><path d="M1054.5 108V112"/><path d="M1063.5 108V112"/><path d="M1073.5 108V112"/><path d="M1082.5 96V112"/><path d="M82 115.5H86"/><path d="M70 125.5H86"/><path d="M82 134.5H86"/><path d="M82 144.5H86"/><path d="M82 153.5H86"/><path d="M82 163.5H86"/><path d="M82 172.5H86"/><path d="M70 182.5H86"/><path d="M82 191.5H86"/><path d="M82 201.5H86"/><path d="M82 210.5H86"/><path d="M82 220.5H86"/><path d="M82 229.5H86"/><path d="M70 239.5H86"/><path d="M82 248.5H86"/><path d="M82 258.5H86"/><path d="M82 267.5H86"/><path d="M82 277.5H86"/><path d="M82 286.5H86"/><path d="M70 296.5H86"/><path d="M82 305.5H86"/><path d="M82 315.5H86"/><path d="M82 324.5H86"/><path d="M82 334.5H86"/><path d="M82 343.5H86"/><path d="M70 353.5H86"/><path d="M82 362.5H86"/><path d="M82 372.5H86"/><path d="M82 382.5H86"/><path d="M82 391.5H86"/><path d="M82 401.5H86"/><path d="M70 410.5H86"/><path d="M82 420.5H86"/><path d="M82 429.5H86"/><path d="M82 439.5H86"/><path d="M82 448.5H86"/><path d="M82 458.5H86"/><path d="M70 467.5H86"/><path d="M82 477.5H86"/><path d="M82 486.5H86"/><path d="M82 496.5H86"/><path d="M82 505.5H86"/><path d="M82 515.5H86"/><path d="M70 524.5H86"/><path d="M82 534.5H86"/><path d="M82 543.5H86"/><path d="M82 553.5H86"/><path d="M82 562.5H86"/><path d="M82 572.5H86"/><path d="M70 581.5H86"/><path d="M82 591.5H86"/><path d="M82 600.5H86"/><path d="M82 610.5H86"/><path d="M82 619.5H86"/><path d="M82 629.5H86"/><path d="M70 638.5H86"/><path d="M82 648.5H86"/><path d="M82 657.5H86"/><path d="M82 667.5H86"/><path d="M82 676.5H86"/><path d="M82 686.5H86"/><path d="M70 695.5H86"/><path d="M82 705.5H86"/><path d="M82 714.5H86"/><path d="M82 724.5H86"/><path d="M82 733.5H86"/><path d="M82 743.5H86"/><path d="M70 752.5H86"/><path d="M82 762.5H86"/><path d="M82 771.5H86"/><path d="M82 781.5H86"/><path d="M82 791.5H86"/><path d="M82 800.5H86"/><path d="M70 810.5H86"/><path d="M82 819.5H86"/><path d="M82 829.5H86"/><path d="M82 838.5H86"/><path d="M82 848.5H86"/><path d="M82 857.5H86"/><path d="M70 867.5H86"/><path d="M82 876.5H86"/></g></svg>
<style>.rl{position:absolute;font-size:9.6px;line-height:11px;color:#d2d2d2;white-space:nowrap;letter-spacing:0.1px}</style>
<div class="abs" style="left:70px;top:95px;width:1016px;height:782px;overflow:hidden;clip-path:polygon(0 0,100% 0,100% 17px,16px 17px,16px 100%,0 100%)"><div style="position:absolute;left:-70px;top:-95px"><div class="rl" style="left:115.4px;top:96px">36</div><div class="rl" style="left:172.5px;top:96px">72</div><div class="rl" style="left:229.5px;top:96px">108</div><div class="rl" style="left:286.6px;top:96px">144</div><div class="rl" style="left:343.7px;top:96px">180</div><div class="rl" style="left:400.8px;top:96px">216</div><div class="rl" style="left:457.8px;top:96px">252</div><div class="rl" style="left:514.9px;top:96px">288</div><div class="rl" style="left:572.0px;top:96px">324</div><div class="rl" style="left:629.0px;top:96px">360</div><div class="rl" style="left:686.1px;top:96px">396</div><div class="rl" style="left:743.2px;top:96px">432</div><div class="rl" style="left:800.2px;top:96px">468</div><div class="rl" style="left:857.3px;top:96px">504</div><div class="rl" style="left:914.4px;top:96px">540</div><div class="rl" style="left:971.5px;top:96px">576</div><div class="rl" style="left:1028.5px;top:96px">612</div><div class="rl" style="left:1085.6px;top:96px">648</div><div class="rl" style="left:72.2px;top:110.6px">6</div><div class="rl" style="left:72.2px;top:167.7px">2</div><div class="rl" style="left:72.2px;top:158.6px">7</div><div class="rl" style="left:72.2px;top:224.7px">8</div><div class="rl" style="left:72.2px;top:215.7px">0</div><div class="rl" style="left:72.2px;top:206.6px">1</div><div class="rl" style="left:72.2px;top:281.8px">4</div><div class="rl" style="left:72.2px;top:272.8px">4</div><div class="rl" style="left:72.2px;top:263.7px">1</div><div class="rl" style="left:72.2px;top:338.9px">0</div><div class="rl" style="left:72.2px;top:329.8px">8</div><div class="rl" style="left:72.2px;top:320.8px">1</div><div class="rl" style="left:72.2px;top:395.9px">6</div><div class="rl" style="left:72.2px;top:386.9px">1</div><div class="rl" style="left:72.2px;top:377.8px">2</div><div class="rl" style="left:72.2px;top:453.0px">2</div><div class="rl" style="left:72.2px;top:444.0px">5</div><div class="rl" style="left:72.2px;top:434.9px">2</div><div class="rl" style="left:72.2px;top:510.1px">8</div><div class="rl" style="left:72.2px;top:501.0px">8</div><div class="rl" style="left:72.2px;top:492.0px">2</div><div class="rl" style="left:72.2px;top:567.2px">4</div><div class="rl" style="left:72.2px;top:558.1px">2</div><div class="rl" style="left:72.2px;top:549.1px">3</div><div class="rl" style="left:72.2px;top:624.2px">0</div><div class="rl" style="left:72.2px;top:615.2px">6</div><div class="rl" style="left:72.2px;top:606.1px">3</div><div class="rl" style="left:72.2px;top:681.3px">6</div><div class="rl" style="left:72.2px;top:672.3px">9</div><div class="rl" style="left:72.2px;top:663.2px">3</div><div class="rl" style="left:72.2px;top:738.4px">2</div><div class="rl" style="left:72.2px;top:729.3px">3</div><div class="rl" style="left:72.2px;top:720.3px">4</div><div class="rl" style="left:72.2px;top:795.4px">8</div><div class="rl" style="left:72.2px;top:786.4px">6</div><div class="rl" style="left:72.2px;top:777.3px">4</div><div class="rl" style="left:72.2px;top:852.5px">4</div><div class="rl" style="left:72.2px;top:843.5px">0</div><div class="rl" style="left:72.2px;top:834.4px">5</div></div></div><!--RE-->

<!--DOCKS--><!-- ===== SCROLLBARS / STATUS ===== -->
<div class="abs" style="left:1067px;top:112px;width:17px;height:765px;background:#4a4a4a"></div>
<div class="abs" style="left:1068.5px;top:467px;width:14px;height:24.5px;border-radius:7px;background:#5c5c5c"></div>
<div class="abs" style="left:70px;top:877px;width:1016px;height:16px;background:#535353"></div>
<div class="abs" style="left:284px;top:877px;width:216px;height:16px;background:#4a4a4a"></div>
<div class="abs" style="left:501px;top:877px;width:566px;height:16px;background:#4a4a4a"></div>
<div class="abs" style="left:773.3px;top:878px;width:24.5px;height:15px;border-radius:7px 7px 0 0;background:#5c5c5c"></div>
<div class="abs" style="left:73.8px;top:878px;width:68px;height:15px;background:#3e3e3e;border:1px solid #5a5a5a;border-bottom:0;border-radius:2px 2px 0 0"></div>
<div class="abs" style="left:124.5px;top:879px;width:17px;height:14px;background:#4b4b4b;border-left:1px solid #5a5a5a"></div>
<div class="abs" style="left:183.6px;top:878px;width:58.5px;height:15px;background:#3e3e3e;border:1px solid #5a5a5a;border-bottom:0;border-radius:2px 2px 0 0"></div>
<div class="abs" style="left:224.8px;top:879px;width:17px;height:14px;background:#4b4b4b;border-left:1px solid #5a5a5a"></div>
<div class="t" id="t_zoom" style="transform:scaleX(0.9531);left:77.6px;top:880px;font-size:11px;line-height:14px;color:#e6e6e6">158.54%</div>
<div class="t" id="t_pg" style="left:188.5px;top:880px;font-size:11px;line-height:14px;color:#e6e6e6">1</div>
<div class="t" id="t_tog" style="transform:scaleX(1.0407);left:343.9px;top:880px;font-size:10.5px;line-height:14px;color:#dcdcdc">Toggle Selection</div>
<svg width="1115" height="893" viewBox="0 0 1115 893">
<path class="chev" d="M129.5 885.2L132.8 888.5L136.1 885.2M229.5 885.2L232.8 888.5L236.1 885.2"/>
<g fill="#707070"><rect x="151.3" y="882" width="1.4" height="8"/><path d="M158 882V890L152.8 886Z"/><path d="M175 882V890L169.5 886Z"/><path d="M251.5 882V890L257 886Z"/><path d="M267 882V890L272.2 886Z"/><rect x="272.3" y="882" width="1.4" height="8"/></g>
<path d="M490.5 881.5V890.5L496 886Z" fill="#dcdcdc"/>
<path d="M511.5 882.5L508.3 886L511.5 889.5M1056.5 882.5L1059.7 886L1056.5 889.5" fill="none" stroke="#8a8a8a" stroke-width="1.1"/>
<path d="M1072 866.5L1075.3 870L1078.6 866.5" fill="none" stroke="#a0a0a0" stroke-width="1.2"/>
</svg>
<!-- ===== RIGHT DOCK ===== -->
<div class="abs" style="left:1083.5px;top:67px;width:2.5px;height:826px;background:#3e3e3e"></div>
<div class="abs" style="left:1086px;top:67px;width:29px;height:826px;background:#535353"></div>
<div class="abs" style="left:1086px;top:67px;width:29px;height:11.5px;background:#484848"></div>
<svg width="1115" height="893" viewBox="0 0 1115 893">
<path d="M1111.5 69.8L1109.4 72L1111.5 74.2M1115 69.8L1112.9 72L1115 74.2" fill="none" stroke="#b4b4b4" stroke-width="1"/>
<g fill="#3e3e3e" id="grip"><rect x="1095" y="82" width="1" height="3.5"/><rect x="1097" y="82" width="1" height="3.5"/><rect x="1099" y="82" width="1" height="3.5"/><rect x="1101" y="82" width="1" height="3.5"/><rect x="1103" y="82" width="1" height="3.5"/><rect x="1105" y="82" width="1" height="3.5"/><rect x="1107" y="82" width="1" height="3.5"/><rect x="1109" y="82" width="1" height="3.5"/><rect x="1111" y="82" width="1" height="3.5"/><rect x="1113" y="82" width="1" height="3.5"/></g>
<use href="#grip" y="96.5"/><use href="#grip" y="166"/><use href="#grip" y="263"/><use href="#grip" y="359.5"/>
<g fill="#3e3e3e"><rect x="1087" y="175" width="28" height="1.5"/><rect x="1087" y="243.5" width="28" height="1.5"/><rect x="1087" y="340.5" width="28" height="1.5"/><rect x="1087" y="437" width="28" height="1.5"/><rect x="1087" y="534.5" width="28" height="1.5"/></g>
<!-- palette -->
<path d="M1097 103C1097 98 1102 95.5 1108 95.5C1114 95.5 1118 98.5 1118 102C1118 105 1114 104.5 1113 106.5C1112.5 108.5 1110 109 1106 109C1101 109 1097 107 1097 103Z" fill="#c6c6c6"/><g fill="#535353"><circle cx="1101.5" cy="104" r="1.4"/><circle cx="1102.5" cy="100" r="1.4"/><circle cx="1106.5" cy="98.3" r="1.4"/><circle cx="1111" cy="99" r="1.4"/></g>
<!-- color guide -->
<path d="M1098.5 137.5V123A14.5 14.5 0 0 1 1113 137.5Z" fill="#c6c6c6"/><path d="M1098.5 137.5L1113 137.5M1098.5 137.5L1110 128.5M1098.5 137.5L1105 125" stroke="#8a8a8a" stroke-width="0.8"/><path d="M1098.5 137.5V123" stroke="#e0e0e0" stroke-width="1.6"/>
<!-- kuler -->
<circle cx="1104" cy="158.5" r="5" fill="none" stroke="#c6c6c6" stroke-width="1.4"/><circle cx="1104" cy="158.5" r="1.8" fill="#c6c6c6"/><path d="M1107.5 155.5L1112.5 151.5M1107.5 161.5L1112 166" stroke="#c6c6c6" stroke-width="1.3"/><circle cx="1113" cy="151" r="1.8" fill="#c6c6c6"/><circle cx="1112.5" cy="166.5" r="1.8" fill="#c6c6c6"/>
<!-- brushes -->
<path d="M1100 199H1111L1110 207.5H1101Z" fill="#c6c6c6"/><path d="M1102.5 199V193C1102 191 1101 190 1102 188.5C1103.5 190 1104 191.5 1103.8 193.5V199M1106 199V194L1105 189.5L1107 189.5L1107 199M1109 199L1110 194C1110 192 1112 191 1114 191.5C1113 193 1112 194 1111.5 196V199" fill="#c6c6c6" stroke="#c6c6c6" stroke-width="1"/>
<!-- symbols club -->
<g fill="#c6c6c6"><circle cx="1106" cy="221" r="4"/><circle cx="1101.5" cy="227.5" r="4"/><circle cx="1110.5" cy="227.5" r="4"/><path d="M1105 227H1107L1108 233.5H1111V234.8H1101V233.5H1104Z"/></g>
<!-- stroke lines -->
<path d="M1097 263H1115" stroke="#c6c6c6" stroke-width="1.2"/><path d="M1097 268H1115" stroke="#c6c6c6" stroke-width="2.2"/><path d="M1097 273.5H1115" stroke="#c6c6c6" stroke-width="3"/>
<!-- gradient -->
<rect x="1097.5" y="289.5" width="16.3" height="12" fill="url(#gr2)" stroke="#c6c6c6" stroke-width="1"/>
<!-- transparency -->
<circle cx="1103" cy="323.5" r="6.3" fill="#c6c6c6"/><circle cx="1108.5" cy="327" r="6.3" fill="#8e8e8e" stroke="#c6c6c6" stroke-width="0"/>
<!-- cc -->
<path d="M1101 360.5A5.5 5.5 0 0 0 1101 371.5H1112A5.5 5.5 0 0 0 1113 360.7A6.5 6.5 0 0 0 1101 360.5Z" fill="none" stroke="#c6c6c6" stroke-width="1.6"/><path d="M1100.5 368C1100.5 364 1105 362.5 1107.5 366C1110 369.5 1114 368 1114 365" fill="none" stroke="#c6c6c6" stroke-width="1.5"/>
<!-- appearance -->
<circle cx="1105.5" cy="393.5" r="6" fill="#c6c6c6"/><circle cx="1105.5" cy="393.5" r="8.3" fill="none" stroke="#c6c6c6" stroke-width="1" stroke-dasharray="1.6 1.4"/>
<!-- graphic styles -->
<rect x="1102.5" y="414.5" width="12" height="12" fill="none" stroke="#c6c6c6" stroke-width="1.2"/><rect x="1098" y="421.5" width="5" height="5" fill="#535353" stroke="#c6c6c6" stroke-width="1"/><rect x="1100.5" y="424" width="5" height="5" fill="#535353" stroke="#c6c6c6" stroke-width="1"/>
<!-- export -->
<path d="M1105 455.5H1098V469.5H1112V463" fill="none" stroke="#c6c6c6" stroke-width="1.6"/><path d="M1104.5 463L1113 454.5M1107.5 454H1113.5V460" fill="none" stroke="#c6c6c6" stroke-width="1.7"/>
<!-- layers -->
<path d="M1105.5 482L1114.5 486.5L1105.5 491L1096.5 486.5Z" fill="#c6c6c6"/><path d="M1096.5 491L1105.5 495.5L1114.5 491L1112 489.7L1105.5 493L1099 489.7Z" fill="#c6c6c6"/><path d="M1096.5 495L1105.5 499.5L1114.5 495L1112 493.7L1105.5 497L1099 493.7Z" fill="#c6c6c6" opacity="0"/>
<!-- artboards -->
<rect x="1096.500" y="509.5" width="10" height="11.5" fill="none" stroke="#c6c6c6" stroke-width="1.2"/><rect x="1101" y="516" width="13" height="9" fill="#535353" stroke="#c6c6c6" stroke-width="1.2"/>
</svg>
<!--DOCKE-->
<!--SWPS--><!-- ===== SWATCHES PANEL ===== -->
<div class="abs" style="left:836px;top:100px;width:253.8px;height:202px;background:#535353;border-radius:3px 3px 0 0;box-shadow:0 1px 5px rgba(0,0,0,.45),0 0 0 1px #3c3c3c"></div>
<div class="abs" style="left:836px;top:100px;width:253.8px;height:13px;background:#484848;border-radius:3px 3px 0 0"></div>
<div class="abs" style="left:836px;top:113px;width:253.8px;height:27px;background:#424242;border-top:1px solid #3c3c3c"></div>
<div class="abs" style="left:836.5px;top:114px;width:64.5px;height:26px;background:#535353"></div>
<div class="abs" style="left:836px;top:293.5px;width:253.8px;height:2px;background:#3a3a3a"></div>
<div class="abs" style="left:836px;top:295.5px;width:253.8px;height:6.5px;background:#4a4a4a"></div>
<div class="t" id="t_sw" style="transform:scaleX(0.8933);left:845.8px;top:118.3px;font-size:11.5px;line-height:14px;font-weight:bold;color:#ececec">Swatches</div>
<svg width="1115" height="320" viewBox="0 0 1115 320">
<defs><linearGradient id="sg1" x1="0" x2="1"><stop offset="0" stop-color="#fff"/><stop offset="1" stop-color="#111"/></linearGradient><linearGradient id="sg2" x1="0" x2="1"><stop offset="0" stop-color="#fdea2e"/><stop offset="1" stop-color="#ee5a2a"/></linearGradient><linearGradient id="sg3" x1="0" x2="1"><stop offset="0" stop-color="#2f7fd0"/><stop offset="1" stop-color="#9cc8ee"/></linearGradient></defs>
<path d="M842.5 104.5L847.5 109.5M847.5 104.5L842.5 109.5" stroke="#c6c6c6" stroke-width="1.2"/>
<path d="M1079.3 104.5L1077.2 106.7L1079.3 108.9M1082.8 104.5L1080.7 106.7L1082.8 108.9" fill="none" stroke="#c6c6c6" stroke-width="1"/>
<path d="M1073.7 123H1083.7M1073.7 125.3H1083.7M1073.7 127.6H1083.7M1073.7 129.9H1083.7" stroke="#c6c6c6" stroke-width="1"/>
<!-- fill/stroke -->
<rect x="853" y="157" width="18" height="18" fill="#fff" stroke="#222" stroke-width="1"/><rect x="858.8" y="162.8" width="6.4" height="6.4" fill="#535353" stroke="#222" stroke-width="1"/><path d="M853.5 174.5L870.5 157.5" stroke="#ea3a33" stroke-width="1.6"/>
<rect x="843.6" y="147.6" width="17" height="17" fill="#27226b" stroke="#fff" stroke-width="1.3"/><rect x="842.5" y="146.5" width="19.2" height="19.2" fill="none" stroke="#222" stroke-width="0.9"/>
<!-- view buttons -->
<rect x="1036.9" y="147" width="47" height="22" rx="2.5" fill="#505050" stroke="#5e5e5e" stroke-width="1"/><rect x="1060.5" y="147.3" width="23.2" height="21.4" rx="2" fill="#2e2e2e"/>
<path d="M1042.5 152.3H1054.5M1042.5 156.2H1054.5M1042.5 160.1H1054.5M1042.5 164H1054.5" stroke="#c6c6c6" stroke-width="1.7"/>
<g fill="#c6c6c6"><rect x="1065.7" y="151.2" width="3.6" height="3.6"/><rect x="1070.5" y="151.2" width="3.6" height="3.6"/><rect x="1075.3" y="151.2" width="3.6" height="3.6"/><rect x="1065.7" y="156" width="3.6" height="3.6"/><rect x="1070.5" y="156" width="3.6" height="3.6"/><rect x="1075.3" y="156" width="3.6" height="3.6"/><rect x="1065.7" y="160.8" width="3.6" height="3.6"/><rect x="1070.5" y="160.8" width="3.6" height="3.6"/><rect x="1075.3" y="160.8" width="3.6" height="3.6"/></g>
<rect x="842.5" y="181.5" width="242" height="92.3" fill="none" stroke="#5f5f5f" stroke-width="1"/>
<path d="M1074.5 189.5L1078 186L1081.5 189.5M1074.5 265L1078 268.5L1081.5 265" fill="none" stroke="#5e5e5e" stroke-width="1.1"/>
<rect x="843" y="182" width="13" height="13" fill="#fff"/><path d="M843 195L856 182" stroke="#ea3a33" stroke-width="1.6"/><rect x="857" y="182" width="13" height="13" fill="#f4f4f4"/><g fill="none" stroke="#555" stroke-width="0.7"><circle cx="863.5" cy="188.5" r="4.6"/><circle cx="863.5" cy="188.5" r="2.2"/><path d="M857 188.5H870 M863.5 182V195"/></g><rect x="871" y="182" width="13" height="13" fill="#ffffff"/><rect x="885" y="182" width="13" height="13" fill="#000000"/><rect x="899" y="182" width="13" height="13" fill="#e93e30"/><rect x="913" y="182" width="13" height="13" fill="#fdee35"/><rect x="927" y="182" width="13" height="13" fill="#52a955"/><rect x="941" y="182" width="13" height="13" fill="#47adeb"/><rect x="955" y="182" width="13" height="13" fill="#2e3192"/><rect x="969" y="182" width="13" height="13" fill="#e9478f"/><rect x="983" y="182" width="13" height="13" fill="#bd2f2e"/><rect x="997" y="182" width="13" height="13" fill="#e93e30"/><rect x="1011" y="182" width="13" height="13" fill="#ec5a29"/><rect x="1025" y="182" width="13" height="13" fill="#f1912a"/><rect x="1039" y="182" width="13" height="13" fill="#f5ab3a"/><rect x="1053" y="182" width="13" height="13" fill="#f8ec31"/><rect x="843" y="196" width="13" height="13" fill="#d6de2a"/><rect x="857" y="196" width="13" height="13" fill="#8cc540"/><rect x="871" y="196" width="13" height="13" fill="#56b54a"/><rect x="885" y="196" width="13" height="13" fill="#429645"/><rect x="899" y="196" width="13" height="13" fill="#2c6a3a"/><rect x="913" y="196" width="13" height="13" fill="#57b778"/><rect x="927" y="196" width="13" height="13" fill="#4ba79c"/><rect x="941" y="196" width="13" height="13" fill="#43a8e0"/><rect x="955" y="196" width="13" height="13" fill="#2677bb"/><rect x="969" y="196" width="13" height="13" fill="#2a3a8f"/><rect x="983" y="196" width="13" height="13" fill="#111"/><rect x="984.2" y="197.2" width="10.6" height="10.6" fill="#27226b" stroke="#fff" stroke-width="1.2"/><rect x="997" y="196" width="13" height="13" fill="#65288f"/><rect x="1011" y="196" width="13" height="13" fill="#8e2b8e"/><rect x="1025" y="196" width="13" height="13" fill="#9e2a60"/><rect x="1039" y="196" width="13" height="13" fill="#d8365e"/><rect x="1053" y="196" width="13" height="13" fill="#e6447e"/><rect x="843" y="210" width="13" height="13" fill="#c8b89a"/><rect x="857" y="210" width="13" height="13" fill="#9c8578"/><rect x="871" y="210" width="13" height="13" fill="#736558"/><rect x="885" y="210" width="13" height="13" fill="#5a4840"/><rect x="899" y="210" width="13" height="13" fill="#c49a6c"/><rect x="913" y="210" width="13" height="13" fill="#a97c50"/><rect x="927" y="210" width="13" height="13" fill="#8b5e3c"/><rect x="941" y="210" width="13" height="13" fill="#754c29"/><rect x="955" y="210" width="13" height="13" fill="#603813"/><rect x="969" y="210" width="13" height="13" fill="#3c2415"/><rect x="983" y="210" width="13" height="13" fill="url(#sg1)"/><rect x="997" y="210" width="13" height="13" fill="url(#sg2)"/><rect x="1011" y="210" width="13" height="13" fill="url(#sg3)"/><g fill="#fff" opacity=".45"><rect x="1018" y="211" width="3" height="3"/><rect x="1021" y="214" width="3" height="3"/><rect x="1018" y="217" width="3" height="3"/><rect x="1021" y="220" width="3" height="3"/><rect x="1015" y="220" width="3" height="3"/></g><rect x="1025" y="210" width="13" height="13" fill="#0a0a0a"/><circle cx="1031.5" cy="216.5" r="4.3" fill="#e8e8e8"/><circle cx="1031.5" cy="216.5" r="4.3" fill="none" stroke="#aaa" stroke-width="1" stroke-dasharray="1 1"/><rect x="1039" y="210" width="13" height="13" fill="#4fae3c"/><path d="M1039 213l3 3l3.5-3l3.5 3l3-3M1039 219l3-3l3.5 3l3.5-3l3 3" stroke="#d9e96a" stroke-width="1.6" fill="none"/><rect x="1043" y="220" width="5" height="3" fill="#f4f8e0"/><rect x="1053" y="210" width="13" height="13" fill="#a47a5c"/><path d="M1054 211h2m2 1h2m2-1h2M1053 213h2m3 1h2m2 0h2M1054 215h3m2 1h2m2-1h1M1053 217h2m2 0h3m2 1h2M1054 219h2m3 0h2m2 1h2M1053 221h3m1 1h3m2-1h2" stroke="#e8ddd0" stroke-width="1" fill="none"/><rect x="857" y="225.7" width="13" height="13" fill="#000000"/><rect x="871" y="225.7" width="13" height="13" fill="#3a3a3c"/><rect x="885" y="225.7" width="13" height="13" fill="#4f4f51"/><rect x="899" y="225.7" width="13" height="13" fill="#6d6e70"/><rect x="913" y="225.7" width="13" height="13" fill="#808184"/><rect x="927" y="225.7" width="13" height="13" fill="#929497"/><rect x="941" y="225.7" width="13" height="13" fill="#a6a8ab"/><rect x="955" y="225.7" width="13" height="13" fill="#bbbdbf"/><rect x="969" y="225.7" width="13" height="13" fill="#d0d2d3"/><rect x="983" y="225.7" width="13" height="13" fill="#e6e7e8"/><rect x="997" y="225.7" width="13" height="13" fill="#f1f1f2"/><rect x="857" y="241.8" width="13" height="13" fill="#e93e30"/><rect x="871" y="241.8" width="13" height="13" fill="#ef6a32"/><rect x="885" y="241.8" width="13" height="13" fill="#fddc2e"/><rect x="899" y="241.8" width="13" height="13" fill="#4da64e"/><rect x="913" y="241.8" width="13" height="13" fill="#233e99"/><rect x="927" y="241.8" width="13" height="13" fill="#7f3f97"/><path d="M844 227.2h4" stroke="#c6c6c6" stroke-width="1"/><rect x="844" y="229.7" width="11" height="7" fill="#c6c6c6"/><path d="M844 243.3h4" stroke="#c6c6c6" stroke-width="1"/><rect x="844" y="245.8" width="11" height="7" fill="#c6c6c6"/>
<!-- bottom icons -->
<g fill="#c6c6c6"><rect x="848.3" y="279.5" width="2" height="9.5"/><rect x="851.3" y="279.5" width="2.6" height="9.5"/><path d="M854.8 280.3L857 279.7L859.8 288.6L857.6 289.2Z"/><path d="M860 288L863.2 288L861.6 289.8Z"/></g>
<circle cx="878.5" cy="284.5" r="3.3" fill="none" stroke="#c6c6c6" stroke-width="1.2"/><circle cx="878.5" cy="284.5" r="1.1" fill="#c6c6c6"/><path d="M881 282.5L884 280.3M881 286.5L884 288.8" stroke="#c6c6c6" stroke-width="1"/><circle cx="884.5" cy="280" r="1.4" fill="#c6c6c6"/><circle cx="884.5" cy="289" r="1.4" fill="#c6c6c6"/>
<path d="M903.5 288.3H914A3 3 0 0 0 914.3 282.4A4.2 4.2 0 0 0 906.5 281.5A3.4 3.4 0 0 0 903.5 288.3Z" fill="#c6c6c6"/><path d="M898 286.5H905M903 284.3L905.3 286.5L903 288.7" stroke="#c6c6c6" stroke-width="1.3" fill="none"/>
<g fill="#c6c6c6"><rect x="946.5" y="279.3" width="9.6" height="9.6" /><path d="M957 288.5L960.2 288.5L958.6 290.3Z"/></g><path d="M949.7 279.3V289M953 279.3V289M946.5 282.5H956M946.5 285.8H956" stroke="#535353" stroke-width="0.8"/>
<rect x="973.3" y="279.8" width="10" height="9.6" fill="none" stroke="#c6c6c6" stroke-width="1.1"/><path d="M973.3 281H983.3" stroke="#c6c6c6" stroke-width="1.6"/><path d="M975.3 284H976.5M975.3 286.3H976.5M978 284H981.5M978 286.3H981.5" stroke="#c6c6c6" stroke-width="1"/>
<path d="M998.3 279.5h5" stroke="#c6c6c6" stroke-width="1"/><rect x="998.3" y="281.3" width="12.5" height="7.8" fill="#c6c6c6"/>
<path d="M1025.3 279.8H1035V289.5H1031L1025.3 284.5Z" fill="#c6c6c6"/><path d="M1025.3 284.5H1031V289.5" fill="#535353" stroke="#535353" stroke-width="0.5"/><path d="M1026.3 285.8L1030 289" stroke="#c6c6c6" stroke-width="0"/>
<path d="M1051.5 281.5H1060.5M1054.3 281V279.5H1057.7V281" stroke="#c6c6c6" stroke-width="1.1" fill="none"/><path d="M1052.5 282.5V289.8H1059.5V282.5" fill="none" stroke="#c6c6c6" stroke-width="1.2"/><path d="M1054.8 283.5V288M1057.2 283.5V288" stroke="#c6c6c6" stroke-width="0.9"/>
<g fill="#353535"><rect x="954" y="297" width="1" height="3.5"/><rect x="956" y="297" width="1" height="3.5"/><rect x="958" y="297" width="1" height="3.5"/><rect x="960" y="297" width="1" height="3.5"/><rect x="962" y="297" width="1" height="3.5"/><rect x="964" y="297" width="1" height="3.5"/><rect x="966" y="297" width="1" height="3.5"/><rect x="968" y="297" width="1" height="3.5"/><rect x="970" y="297" width="1" height="3.5"/><rect x="972" y="297" width="1" height="3.5"/></g>
</svg>
<!--SWPE-->
<!--UIEND-->
</div>
</body></html>
